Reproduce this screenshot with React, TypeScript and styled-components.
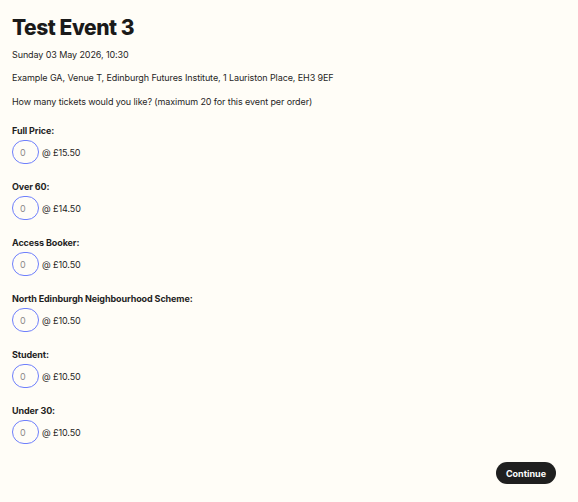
import styled, { createGlobalStyle } from "styled-components";

const GlobalStyle = createGlobalStyle`
  html, body {
    margin: 0;
    background: #fffdf7;
  }
  body {
    font-family: "Inter", "Noto Sans", sans-serif;
    color: #1f1f1f;
  }
`;

const Page = styled.form`
  display: flex;
  flex-direction: column;
  padding: 0 22px 0 12px;
`;

const Title = styled.h1`
  margin: 14px 0 0;
  font-size: 21px;
  line-height: 28px;
  font-weight: 800;
  letter-spacing: -0.45px;
  color: #1a1a1a;
`;

const Line = styled.p<{ $gap: number }>`
  margin: ${({ $gap }) => $gap}px 0 0;
  font-size: 9px;
  line-height: 14px;
  letter-spacing: -0.1px;
`;

const Tickets = styled.div`
  display: flex;
  flex-direction: column;
  gap: 16px;
  margin-top: 15px;
`;

const Group = styled.div`
  display: flex;
  flex-direction: column;
  gap: 2px;
`;

const Label = styled.label`
  font-size: 9px;
  line-height: 14px;
  font-weight: 700;
  letter-spacing: -0.1px;
`;

const Row = styled.div`
  display: flex;
  align-items: center;
  gap: 3px;
  font-size: 9px;
  letter-spacing: -0.1px;
`;

const Qty = styled.input`
  box-sizing: border-box;
  width: 27px;
  height: 24px;
  border: 1.8px solid #6e7ffc;
  border-radius: 12px;
  background: transparent;
  padding: 0 0 0 7px;
  font-family: inherit;
  font-size: 9px;
  color: #8a8a8a;
  outline: none;
`;

const Footer = styled.div`
  display: flex;
  justify-content: flex-end;
  margin-top: 18px;
`;

const Continue = styled.button`
  height: 22px;
  padding: 0 10px;
  border: none;
  border-radius: 11px;
  background: #1f1f1f;
  color: #fff;
  font-family: inherit;
  font-size: 9px;
  font-weight: 700;
`;

const tickets = [
  { name: "Full Price", price: "£15.50" },
  { name: "Over 60", price: "£14.50" },
  { name: "Access Booker", price: "£10.50" },
  { name: "North Edinburgh Neighbourhood Scheme", price: "£10.50" },
  { name: "Student", price: "£10.50" },
  { name: "Under 30", price: "£10.50" },
];

export default function App() {
  return (
    <>
      <GlobalStyle />
      <Page>
        <Title>Test Event 3</Title>
        <Line $gap={6}>Sunday 03 May 2026, 10:30</Line>
        <Line $gap={9}>
          Example GA, Venue T, Edinburgh Futures Institute, 1 Lauriston Place, EH3 9EF
        </Line>
        <Line $gap={10}>
          How many tickets would you like? (maximum 20 for this event per order)
        </Line>
        <Tickets>
          {tickets.map((t, i) => (
            <Group key={t.name}>
              <Label htmlFor={`qty-${i}`}>{t.name}:</Label>
              <Row>
                <Qty id={`qty-${i}`} defaultValue="0" />
                <span>@ {t.price}</span>
              </Row>
            </Group>
          ))}
        </Tickets>
        <Footer>
          <Continue type="button">Continue</Continue>
        </Footer>
      </Page>
    </>
  );
}
